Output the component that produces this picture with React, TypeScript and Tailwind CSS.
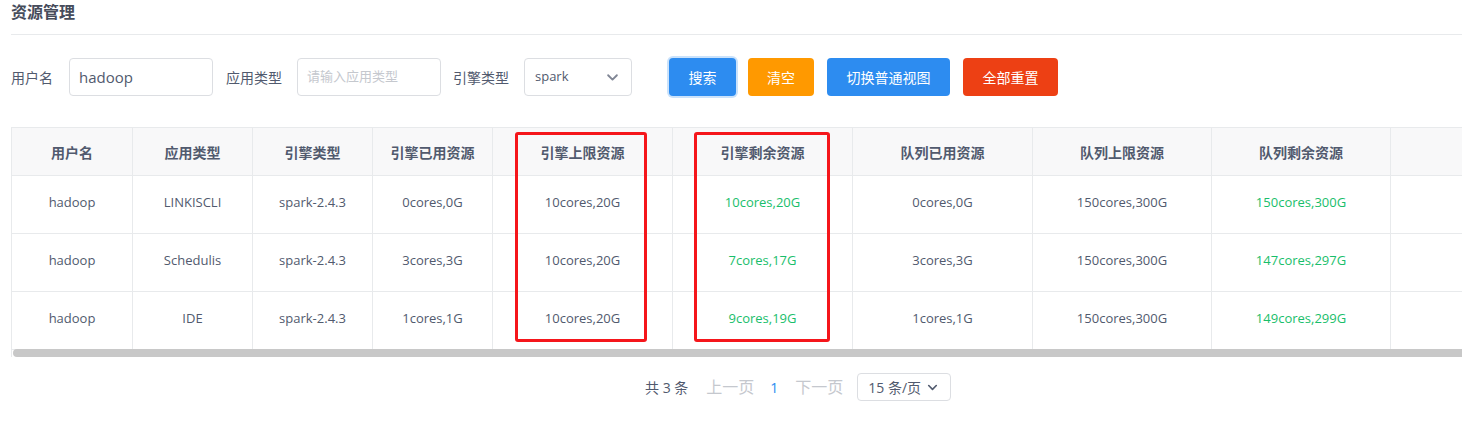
import React from "react";

const cols = [
  { title: "用户名", w: "w-[121px]" },
  { title: "应用类型", w: "w-[120px]" },
  { title: "引擎类型", w: "w-[120px]" },
  { title: "引擎已用资源", w: "w-[120px]" },
  { title: "引擎上限资源", w: "w-[180px]" },
  { title: "引擎剩余资源", w: "w-[180px]" },
  { title: "队列已用资源", w: "w-[180px]" },
  { title: "队列上限资源", w: "w-[179px]" },
  { title: "队列剩余资源", w: "w-[179px]" },
  { title: "", w: "w-[140px]" },
];

const rows = [
  ["hadoop", "LINKISCLI", "spark-2.4.3", "0cores,0G", "10cores,20G", "10cores,20G", "0cores,0G", "150cores,300G", "150cores,300G", ""],
  ["hadoop", "Schedulis", "spark-2.4.3", "3cores,3G", "10cores,20G", "7cores,17G", "3cores,3G", "150cores,300G", "147cores,297G", ""],
  ["hadoop", "IDE", "spark-2.4.3", "1cores,1G", "10cores,20G", "9cores,19G", "1cores,1G", "150cores,300G", "149cores,299G", ""],
];

const green = new Set([5, 8]);

function Chevron({ className }: { className?: string }) {
  return (
    <svg viewBox="0 0 12 12" className={className} fill="none" stroke="currentColor" strokeWidth="1.5" strokeLinecap="round" strokeLinejoin="round">
      <path d="M2.5 4.2 L6 7.7 L9.5 4.2" />
    </svg>
  );
}

export default function App() {
  return (
    <div
      className="w-[1462px] h-[441px] overflow-hidden bg-white text-[#515a6e]"
      style={{ fontFamily: '"Open Sans", "Noto Sans CJK SC", sans-serif' }}
    >
      <div className="pl-[11px]">
        <div className="h-[24px] flex items-center text-[16px] font-bold text-[#464c5b] leading-none">资源管理</div>
        <div className="mt-[10px] border-b border-[#e8eaec]" />

        <div className="mt-[23px] h-[38px] flex items-center text-[14px]">
          <span className="text-[#515a6e]">用户名</span>
          <div className="ml-[16px] w-[144px] h-[38px] border border-[#dcdee2] rounded-[4px] flex items-center pl-[9px] text-[15px] text-[#515a6e]">hadoop</div>
          <span className="ml-[13px]">应用类型</span>
          <div className="ml-[15px] w-[144px] h-[38px] border border-[#dcdee2] rounded-[4px] flex items-center pl-[9px] text-[13px] text-[#c5c8ce]">请输入应用类型</div>
          <span className="ml-[12px]">引擎类型</span>
          <div className="ml-[15px] w-[108px] h-[38px] border border-[#dcdee2] rounded-[4px] flex items-center justify-between pl-[10px] pr-[11px] text-[13px] text-[#515a6e]">
            <span>spark</span>
            <Chevron className="w-[15px] h-[15px] text-[#808695]" />
          </div>
          <button className="ml-[37px] h-[38px] w-[67px] rounded-[4px] bg-[#2d8cf0] text-white text-[14px] ring-2 ring-[#2d8cf0]/25">搜索</button>
          <button className="ml-[12px] h-[38px] w-[66px] rounded-[4px] bg-[#ff9900] text-white text-[14px]">清空</button>
          <button className="ml-[13px] h-[38px] w-[123px] rounded-[4px] bg-[#2d8cf0] text-white text-[14px]">切换普通视图</button>
          <button className="ml-[13px] h-[38px] w-[95px] rounded-[4px] bg-[#ed4014] text-white text-[14px]">全部重置</button>
        </div>

        <div className="relative mt-[31px] w-[1600px] border-l border-t border-[#e8eaec]">
          <div className="flex h-[48px] bg-[#f8f8f9] border-b border-[#e8eaec]">
            {cols.map((c, i) => (
              <div key={i} className={`${c.w} shrink-0 border-r border-[#e8eaec] flex items-center justify-center pt-[1px] text-[14px] font-bold text-[#515a6e]`}>
                {c.title}
              </div>
            ))}
          </div>
          {rows.map((r, ri) => (
            <div key={ri} className="flex h-[58px] border-b border-[#e8eaec]">
              {r.map((v, ci) => (
                <div
                  key={ci}
                  className={`${cols[ci].w} shrink-0 border-r border-[#e8eaec] flex items-center justify-center pb-[3px] text-[13px] ${green.has(ci) ? "text-[#19be6b]" : "text-[#515a6e]"}`}
                >
                  {v}
                </div>
              ))}
            </div>
          ))}
          <div className="h-[8px] ml-[1px] -mt-[1px] bg-[#c8c8c8] rounded-l-[4px]" />

          <div className="absolute left-[503px] top-[4px] w-[132px] h-[210px] border-[3px] border-[#f5161b] rounded-[3px]" />
          <div className="absolute left-[682px] top-[4px] w-[136px] h-[210px] border-[3px] border-[#f5161b] rounded-[3px]" />
        </div>

        <div className="mt-[16px] flex items-center h-[28px] pl-[634px] text-[14px]">
          <span className="text-[#515a6e]">共 3 条</span>
          <span className="ml-[18px] text-[16px] text-[#c5c8ce]">上一页</span>
          <span className="ml-[16px] text-[14px] text-[#2d8cf0]">1</span>
          <span className="ml-[17px] text-[16px] text-[#c5c8ce]">下一页</span>
          <div className="ml-[14px] w-[94px] h-[28px] border border-[#dcdee2] rounded-[4px] flex items-center pl-[10px] gap-[5px] text-[14px] text-[#515a6e]">
            <span>15 条/页</span>
            <Chevron className="w-[13px] h-[13px] text-[#515a6e]" />
          </div>
        </div>
      </div>
    </div>
  );
}
